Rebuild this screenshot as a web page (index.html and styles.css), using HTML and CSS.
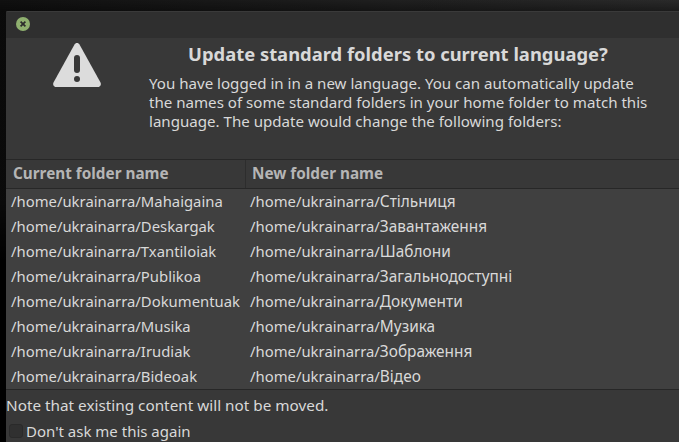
FILE: index.html
```html
<!DOCTYPE html>
<html lang="en">
<head>
    <meta charset="UTF-8">
    <title>Update standard folders</title>
    <link rel="stylesheet" href="styles.css">
</head>
<body>
<div class="window">
    <div class="titlebar">
        <span class="close">
            <svg width="14" height="14" viewBox="0 0 14 14"><circle cx="7" cy="7" r="7" fill="#8fb06f"/><path d="M4.600 4.600l4.800 4.800M9.400 4.600l-4.800 4.800" stroke="#2b2b2b" stroke-width="1.700" fill="none"/></svg>
        </span>
    </div>
    <div class="top">
        <div class="icon">
            <svg width="50" height="47" viewBox="0 0 50 47"><path d="M25 1c1.100 0 2 .6 2.500 1.500l21 38c1 2-.2 4.500-2.500 4.500H4c-2.300 0-3.500-2.500-2.500-4.500l21-38C23 1.600 23.900 1 25 1z" fill="#dcdcdc"/><rect x="22" y="13" width="6" height="18" rx="3" fill="#383838"/><circle cx="25" cy="37" r="3" fill="#383838"/></svg>
        </div>
        <div class="message">
            <h1>Update standard folders to current language?</h1>
            <p>You have logged in in a new language. You can automatically update<br>the names of some standard folders in your home folder to match this<br>language. The update would change the following folders:</p>
        </div>
    </div>
    <div class="table">
        <div class="head">
            <div class="col-a">Current folder name</div>
            <div class="col-b">New folder name</div>
        </div>
        <div class="row"><div class="col-a">/home/ukrainarra/Mahaigaina</div><div class="col-b">/home/ukrainarra/<span class="ua">Стільниця</span></div></div>
        <div class="row"><div class="col-a">/home/ukrainarra/Deskargak</div><div class="col-b">/home/ukrainarra/<span class="ua">Завантаження</span></div></div>
        <div class="row"><div class="col-a">/home/ukrainarra/Txantiloiak</div><div class="col-b">/home/ukrainarra/<span class="ua">Шаблони</span></div></div>
        <div class="row"><div class="col-a">/home/ukrainarra/Publikoa</div><div class="col-b">/home/ukrainarra/<span class="ua">Загальнодоступні</span></div></div>
        <div class="row"><div class="col-a">/home/ukrainarra/Dokumentuak</div><div class="col-b">/home/ukrainarra/<span class="ua">Документи</span></div></div>
        <div class="row"><div class="col-a">/home/ukrainarra/Musika</div><div class="col-b">/home/ukrainarra/<span class="ua">Музика</span></div></div>
        <div class="row"><div class="col-a">/home/ukrainarra/Irudiak</div><div class="col-b">/home/ukrainarra/<span class="ua">Зображення</span></div></div>
        <div class="row"><div class="col-a">/home/ukrainarra/Bideoak</div><div class="col-b">/home/ukrainarra/<span class="ua">Відео</span></div></div>
    </div>
    <div class="note">Note that existing content will not be moved.</div>
    <label class="check"><span class="box"></span>Don't ask me this again</label>
</div>
</body>
</html>
```
FILE: styles.css
```css
*{
    margin: 0;
    padding: 0;
    box-sizing: border-box;
}
html,body{
    height: 100%;
    overflow: hidden;
}
body{
    background-color: #141414;
    background-image:
        linear-gradient(to bottom, rgba(0,0,0,0) 0, rgba(0,0,0,.35) 11px, rgba(0,0,0,.35) 200px, #000 260px),
        linear-gradient(to right, #101010, #2a2a2a);
    padding: 11px 0 0 6px;
    font-family: "Noto Sans", sans-serif;
    font-size: 15px;
    color: #d9d9d9;
}
.window{
    height: 431px;
    background-color: #383838;
    border-radius: 2px 0 0 0;
    overflow: hidden;
}
.titlebar{
    height: 27px;
    background-color: #2f2f2f;
    border-top: 1px solid #3a3a3a;
    display: flex;
    align-items: center;
    padding: 0 0 2px 10px;
}
.close{
    display: flex;
}
.top{
    display: flex;
    height: 121px;
}
.icon{
    width: 143px;
    padding: 4px 0 0 46px;
}
.message h1{
    font-size: 18.4px;
    font-weight: 700;
    line-height: 22px;
    padding: 5px 0 0 39px;
    white-space: nowrap;
}
.message p{
    margin-top: 9px;
    line-height: 19px;
    white-space: nowrap;
    font-size: 15.1px;
}
.table{
    border-top: 1px solid #272727;
    border-bottom: 1px solid #272727;
}
.head{
    display: flex;
    height: 29px;
    line-height: 27px;
    font-weight: 700;
    font-size: 15.3px;
    color: #b5b5b5;
    background-color: #383838;
    border-bottom: 1px solid #272727;
}
.head .col-a{
    padding-left: 7px;
    border-right: 1px solid #2d2d2d;
}
.head .col-b{
    padding-left: 6px;
}
.col-a{
    width: 240px;
    flex-shrink: 0;
}
.row{
    display: flex;
    height: 25px;
    line-height: 24px;
    font-size: 14.85px;
    background-color: #404040;
    padding-left: 5px;
}
.row .col-a{
    width: 239px;
}
.ua{
    font-size: 15.4px;
}
.note{
    margin-top: 5px;
    line-height: 20px;
    font-size: 15.3px;
}
.check{
    display: flex;
    align-items: center;
    margin-top: 6px;
    line-height: 20px;
    padding-left: 3px;
}
.box{
    width: 14px;
    height: 14px;
    background-color: #303030;
    border: 1px solid #2a2a2a;
    border-radius: 3px;
    margin-right: 3px;
}
```
